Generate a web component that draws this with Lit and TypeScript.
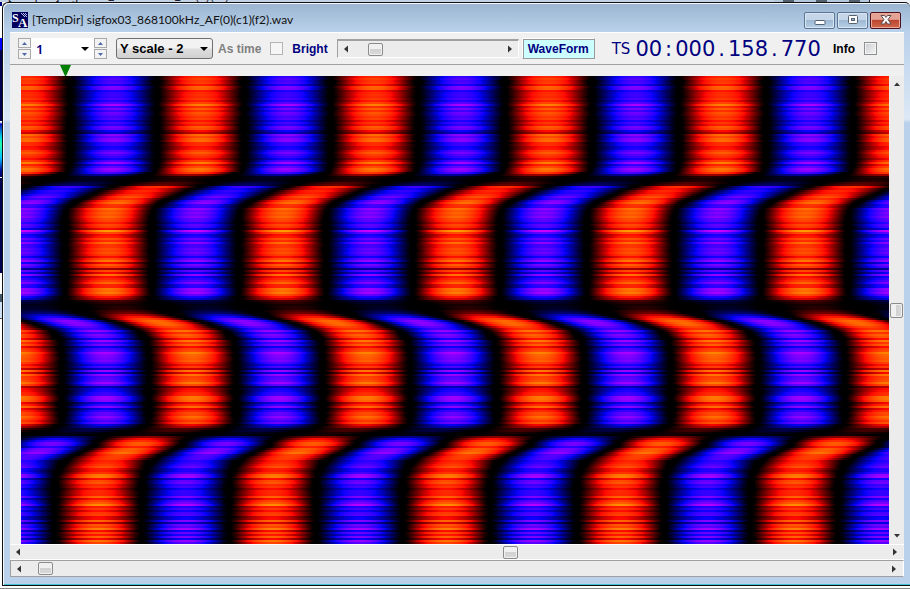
import { LitElement, html, svg, css } from "lit";
import { customElement, property, query } from "lit/decorators.js";
import { classMap } from "lit/directives/class-map.js";

type Key = [y: number, crest: number, level: number];

const PERIOD = 174;
const ROW = 2;

/* Crest position and signal level down the plot, one symbol after another. */
const KEYS: Key[] = [
  [0, 179, 1], [86, 179, 1], [94, 177, 1], [96, 173, 0.85], [99, 166, 0.3],
  [102, 158, 0.2], [105, 150, 0.26], [108, 140, 0.48], [110, 134, 0.78],
  [113, 123, 0.86], [118, 113, 0.88], [125, 97, 0.98], [132, 89, 1.04],
  [140, 87, 1], [218, 87, 1], [222, 86, 0.7], [224, 90, 0.3], [228, 96, 0.18],
  [232, 100, 0.26], [236, 106, 0.48], [239, 114, 0.8], [241, 119, 0.96],
  [245, 138, 1], [254, 161, 1.02], [264, 169, 1], [280, 171, 1],
  [345, 171, 1], [349, 168, 0.76], [352, 160, 0.34], [356, 142, 0.18],
  [358, 130, 0.28], [360, 126, 0.62], [364, 119, 0.86], [369, 116, 0.96],
  [377, 99, 1], [384, 86, 1], [394, 80, 1], [404, 77, 1], [2000, 77, 1],
];

/* Single lines that stand out: above 1 brighter, below 1 weaker. */
const LINES = new Map<number, number>([
  [8, 0.8], [10, 1.12], [14, 0.78], [44, 0.8], [50, 1.12], [54, 0.76],
  [56, 0.66], [58, 1.18], [62, 1.18], [70, 0.76], [86, 1.24], [92, 1.2],
  [118, 1.05], [132, 1.12], [154, 1.36], [158, 0.76], [166, 1.2], [180, 0.76],
  [184, 1.2], [186, 0.76], [188, 1.12], [192, 0.54], [194, 1.05],
  [196, 0.76], [198, 1.2], [200, 0.78], [214, 1.16], [254, 1.18],
  [264, 1.22], [270, 0.76], [292, 0.62], [294, 1.22], [296, 0.76],
  [306, 1.22], [310, 0.62], [324, 1.18], [332, 0.76], [340, 1.2],
  [368, 1.18], [376, 1.2], [398, 1.22], [402, 0.78], [412, 0.78],
  [428, 1.3], [434, 0.76], [442, 0.72], [446, 0.72], [452, 1.26],
  [458, 0.78], [464, 1.18],
]);

function sample(y: number): [number, number] {
  let i = 0;
  while (i < KEYS.length - 2 && KEYS[i + 1][0] <= y) i++;
  const [y0, c0, l0] = KEYS[i];
  const [y1, c1, l1] = KEYS[i + 1];
  const t = Math.min(1, (y - y0) / (y1 - y0));
  return [c0 + (c1 - c0) * t, l0 + (l1 - l0) * t];
}

@customElement("wave-plot")
class WavePlot extends LitElement {
  static styles = css`
    :host { display: block; position: relative; min-width: 0; min-height: 0; overflow: hidden; background: #000; }
    .plot { position: absolute; top: 0; left: 0; display: block; }
  `;

  @query("canvas") canvas!: HTMLCanvasElement;
  private observer = new ResizeObserver(() => this.paint());

  firstUpdated() {
    this.observer.observe(this);
    this.paint();
  }

  disconnectedCallback() {
    super.disconnectedCallback();
    this.observer.disconnect();
  }

  paint() {
    const w = this.clientWidth;
    const h = this.clientHeight;
    if (!w || !h) return;
    this.canvas.width = w;
    this.canvas.height = h;
    const ctx = this.canvas.getContext("2d")!;
    const img = ctx.createImageData(w, h);
    let seed = 7919;
    const random = () => {
      seed = (seed * 48271) % 2147483647;
      return seed / 2147483647;
    };
    for (let y = 0; y < h; y += ROW) {
      const [crest, level] = sample(y);
      const noise = 1 + (random() + random() - 1) * 0.3;
      const gain = level * (LINES.get(y) ?? noise);
      /* Weak lines sink towards black faster near the crossings. */
      const floor = random() * 0.08;
      for (let x = 0; x < w; x++) {
        const v = gain * Math.cos(((x - crest) / PERIOD) * Math.PI * 2);
        const p = Math.max(0, Math.pow(Math.abs(v), 1.35) - floor);
        const main = Math.min(255, (p / 0.64) * 255);
        const extra = Math.max(0, p - 0.58);
        const rgb = v > 0 ? [main, extra * 175, 0] : [extra * 230, 0, main];
        for (let r = 0; r < ROW && y + r < h; r++) {
          const o = ((y + r) * w + x) * 4;
          img.data[o] = rgb[0];
          img.data[o + 1] = rgb[1];
          img.data[o + 2] = rgb[2];
          img.data[o + 3] = 255;
        }
      }
    }
    ctx.putImageData(img, 0, 0);
  }

  render() {
    return html`<canvas class="plot" role="img" aria-label="Waveform"></canvas>`;
  }
}

@customElement("scroll-strip")
class ScrollStrip extends LitElement {
  static styles = css`
    :host { display: flex; min-width: 0; min-height: 0; }
    .strip { flex: 1; display: flex; align-items: center; background: #ececec; min-width: 0; min-height: 0; }
    .vertical { flex-direction: column; }
    .arrow { flex: none; width: 16px; height: 12px; padding: 0; border: 0; background: none; display: grid; place-items: center; }
    .vertical .arrow { width: 12px; height: 16px; }
    svg { display: block; fill: #333; }
    .bar { appearance: none; flex: 1; min-width: 0; width: 0; height: 13px; margin: 0; background: none; }
    .vertical .bar { writing-mode: vertical-lr; width: 13px; height: 0; min-height: 0; }
    .bar::-webkit-slider-thumb {
      appearance: none; box-sizing: border-box; width: 15px; height: 13px;
      border: 1px solid #8b8b8b; border-radius: 2px;
      background: linear-gradient(#f0f0f0 0 45%, #d2d2d2 50%, #dadada);
      box-shadow: inset 0 0 0 1px #f0f0f0;
    }
    .vertical .bar::-webkit-slider-thumb {
      width: 13px; height: 15px;
      background: linear-gradient(90deg, #f0f0f0 0 45%, #d2d2d2 50%, #dadada);
    }
  `;

  @property({ type: Boolean }) vertical = false;
  @property({ type: Number }) value = 0;
  @property() label = "";

  arrow(name: string, d: string) {
    return html`<button class="arrow" aria-label=${name}>
      <svg width="8" height="8" viewBox="0 0 8 8">${svg`<path d=${d} />`}</svg>
    </button>`;
  }

  render() {
    const v = this.vertical;
    return html`<div class=${classMap({ strip: true, vertical: v })}>
      ${v ? this.arrow("Up", "M1 6L4 2.5L7 6Z") : this.arrow("Left", "M6 0.5L2 4L6 7.5Z")}
      <input class="bar" type="range" min="0" max="1000" .value=${String(this.value)} aria-label=${this.label} />
      ${v ? this.arrow("Down", "M1 2L4 5.5L7 2Z") : this.arrow("Right", "M2 0.5L6 4L2 7.5Z")}
    </div>`;
  }
}

@customElement("spin-buttons")
class SpinButtons extends LitElement {
  static styles = css`
    :host { display: flex; flex-direction: column; gap: 1px; width: 13px; }
    .step { height: 10px; padding: 0; border: 1px solid #a9a9a9; background: #f3f3f3; display: grid; place-items: center; }
    svg { display: block; fill: #5068a8; }
  `;

  render() {
    return html`
      <button class="step" aria-label="Increase"><svg width="5" height="3"><path d="M0 3L2.5 0L5 3Z" /></svg></button>
      <button class="step" aria-label="Decrease"><svg width="5" height="3"><path d="M0 0L2.5 3L5 0Z" /></svg></button>
    `;
  }
}

@customElement("app-root")
class AppRoot extends LitElement {
  static styles = css`
    :host {
      display: flex; flex-direction: column; box-sizing: border-box; height: 100vh; overflow: hidden;
      background: #f4f6f8; font: 12px/16px "Liberation Sans", Arial, sans-serif; color: #000;
    }
    * { box-sizing: border-box; }
    .behind { flex: none; height: 2px; overflow: hidden; display: flex; align-items: flex-end; padding-left: 8px; background: #c3d3e4; font: 12px/12px Roboto, sans-serif; color: #223; }
    .behind-caps { display: flex; gap: 22px; margin-left: auto; padding: 0 9px; height: 2px; background: #b4c8de; }
    .behind-cap { width: 11px; height: 2px; background: #53606e; }
    .behind-tail { width: 41px; height: 2px; border-left: 1px solid #223; background: #eef2f6; }
    .desk { flex: 1; min-height: 0; display: flex; }
    .edge { flex: none; width: 2px; background: linear-gradient(
      #00007a 0 4px, #fff 4px 36px, #00f 36px 48px, #000050 48px 119px, #fff 119px 120px,
      #0010c0 122px, #00e0e0 136px, #20ffb0 142px, #00c0ff 156px, #0010a0 168px, #000060 175px,
      #fff 175px 176px, #000050 176px 271px, #fff 271px 292px, #456 292px 300px, #cfe2f3 300px 316px, #555 316px 317px, #fff 317px); }
    .window {
      flex: 1; min-width: 0; display: flex; flex-direction: column; padding: 0 6px 8px 7px;
      border: solid #111; border-width: 1px 0 1px 1px; border-radius: 6px 5px 0 0;
      background: linear-gradient(#9ab4d1, #b9d1ea 28px, #dce8f5 116px, #b9d1ea 120px);
      box-shadow: inset 1px 1px 0 #f4f8fc, inset 0 -1px 0 #45c3d3;
    }
    .title { flex: none; height: 29px; display: flex; align-items: center; gap: 4px; padding: 5px 3px 0 2px; }
    .name { flex: 1; margin: 0; font: 12px/16px Lato, sans-serif; white-space: nowrap; color: #111; }
    .caps { display: flex; gap: 2px; }
    .cap { width: 31px; height: 17px; padding: 0; border: 1px solid #5d7793; border-radius: 2px; display: grid; place-items: center;
      background: linear-gradient(#c4d6e8 0 45%, #9db9d4 50%, #b8d0e6); box-shadow: inset 0 0 0 1px #d8e6f3; }
    .cap.close { border-color: #4d1119; background: linear-gradient(#e3a294 0 42%, #bd4630 50%, #cf6a4c); box-shadow: inset 0 0 0 1px #e8aa9c; }
    .client { flex: 1; min-height: 0; display: flex; flex-direction: column; background: #f0f0f0; }
    .tools { flex: none; height: 33px; display: flex; align-items: center; padding: 0 27px 0 8px; border-top: 1px solid #fff; border-bottom: 1px solid #a0a0a0; font-weight: 700; white-space: nowrap; }
    .pick { position: relative; display: flex; }
    .pick svg { position: absolute; right: 5px; top: 9px; pointer-events: none; }
    .pick select { appearance: none; margin: 0; outline: 0; }
    .count { width: 63px; height: 21px; padding: 0 5px; border: 0; background: #fff; font: 600 13px/16px "Noto Sans", sans-serif; color: #000080; }
    .scale { margin-left: 9px; }
    .scale select { width: 97px; height: 21px; padding: 0 3px; border: 1px solid #707070; border-radius: 3px; background: linear-gradient(#f2f2f2 0 48%, #dedede 52%, #d0d0d0); font: 700 13px/16px "Liberation Sans", sans-serif; color: #000; }
    .tick { display: flex; align-items: center; }
    .tick input { appearance: none; width: 13px; height: 13px; margin: 0; border: 1px solid #b4b4b4; background: #f6f6f6; }
    .as-time { gap: 9px; margin-left: 5px; color: #808080; }
    .bright { margin-left: 9px; color: #000080; }
    .gain { flex: none; width: 182px; height: 19px; margin-left: 9px; border: solid; border-width: 2px 1px 1px; border-color: #a0a0a0 #fff #fff #a0a0a0; }
    .wave { width: 73px; height: 21px; margin-left: 3px; padding: 0; border: 1px solid; border-color: #fff #999 #999 #fff; background: #ccffff; box-shadow: inset 1px 1px 0 #999; font: 700 12px/16px "Liberation Sans", sans-serif; color: #000080; }
    .stamp { display: flex; align-items: center; gap: 5px; margin-left: 17px; font-weight: 400; color: #000080; }
    .unit { font: 15px/20px "DejaVu Sans", sans-serif; }
    .time { font: 21px/24px "DejaVu Sans", sans-serif; }
    .sep { padding: 0 3px; }
    .info { gap: 9px; margin-left: auto; }
    .info input { border-color: #8e8f8f; background: linear-gradient(135deg, #c9ccd0, #f6f6f6); box-shadow: inset 0 0 0 1px #f4f4f4; }
    .ruler { flex: none; height: 11px; padding-left: 50px; }
    .ruler svg { display: block; }
    .view { flex: 1; min-height: 0; display: grid; grid-template-columns: 1fr 15px; padding-left: 11px; }
    .pan { flex: none; height: 16px; border-top: 1px solid #fff; border-bottom: 1px solid #fff; padding-right: 1px; }
    .seek { flex: none; height: 17px; border: 1px solid; border-color: #a0a0a0 #fff #a0a0a0 #a0a0a0; padding-right: 1px; }
    .under { flex: none; height: 3px; background: #fff; border-bottom: 1px solid #888; }
  `;

  caret() {
    return html`<svg width="8" height="4" viewBox="0 0 8 4"><path d="M0 0H8L4 4Z" /></svg>`;
  }

  render() {
    return html`
      <div class="behind" aria-hidden="true">
        <span>[TempDir] sigfox03_868100kHz_AF(0)(f2).wav</span>
        <span class="behind-caps">
          <span class="behind-cap"></span><span class="behind-cap"></span><span class="behind-cap"></span>
        </span>
        <span class="behind-tail"></span>
      </div>
      <div class="desk">
        <div class="edge"></div>
        <main class="window">
          <header class="title">
            <svg width="16" height="16" viewBox="0 0 16 16" aria-hidden="true">
              <rect width="16" height="16" fill="#000060" />
              <path d="M9 1h1v1h-1zM11 1h1v1h-1zM13 1h1v1h-1zM10 2h1v1h-1zM12 2h1v1h-1zM14 2h1v1h-1zM11 3h1v1h-1zM13 3h1v1h-1zM12 4h1v1h-1zM14 4h1v1h-1z" fill="#b8c4f0" />
              <text x="0" y="10" font-family="Liberation Serif" font-weight="700" font-size="12" fill="#fff">S</text>
              <text x="6" y="15" font-family="Liberation Serif" font-weight="700" font-size="13" fill="#fff">A</text>
            </svg>
            <h1 class="name">[TempDir] sigfox03_868100kHz_AF(0)(c1)(f2).wav</h1>
            <div class="caps">
              <button class="cap" aria-label="Minimize">
                <svg width="12" height="12"><rect x="1" y="6.5" width="10" height="4" rx="1" fill="#fff" stroke="#53606e" /></svg>
              </button>
              <button class="cap" aria-label="Maximize">
                <svg width="12" height="12"><rect x="1.5" y="1.5" width="9" height="8" rx="1" fill="#fff" stroke="#53606e" /><rect x="4.5" y="4.5" width="3" height="2" fill="#9db9d4" stroke="#53606e" /></svg>
              </button>
              <button class="cap close" aria-label="Close">
                <svg width="12" height="12"><path d="M1 1.500H4.500L6 3.500L7.500 1.500H11L8 5.500L11 10H7.500L6 7.500L4.500 10H1L4 5.500Z" fill="#fff" stroke="#5b4a50" /></svg>
              </button>
            </div>
          </header>
          <section class="client">
            <div class="tools">
              <spin-buttons></spin-buttons>
              <span class="pick">
                <select class="count" aria-label="Channel"><option>1</option></select>${this.caret()}
              </span>
              <spin-buttons></spin-buttons>
              <span class="pick scale">
                <select aria-label="Y scale"><option>Y scale - 2</option></select>${this.caret()}
              </span>
              <label class="tick as-time">As time<input type="checkbox" /></label>
              <span class="bright">Bright</span>
              <scroll-strip class="gain" label="Bright" .value=${105}></scroll-strip>
              <button class="wave">WaveForm</button>
              <div class="stamp">
                <span class="unit">TS</span>
                <span class="time">00<span class="sep">:</span>000<span class="sep">.</span>158<span class="sep">.</span>770</span>
              </div>
              <label class="tick info">Info<input type="checkbox" /></label>
            </div>
            <div class="ruler"><svg width="11" height="11"><path d="M0 0H11L6 11H5Z" fill="#008000" /></svg></div>
            <div class="view">
              <wave-plot></wave-plot>
              <scroll-strip vertical label="Vertical position" .value=${500}></scroll-strip>
            </div>
            <scroll-strip class="pan" label="Horizontal position" .value=${564}></scroll-strip>
            <scroll-strip class="seek" label="File position" .value=${13}></scroll-strip>
          </section>
        </main>
      </div>
      <div class="under"></div>
    `;
  }
}
